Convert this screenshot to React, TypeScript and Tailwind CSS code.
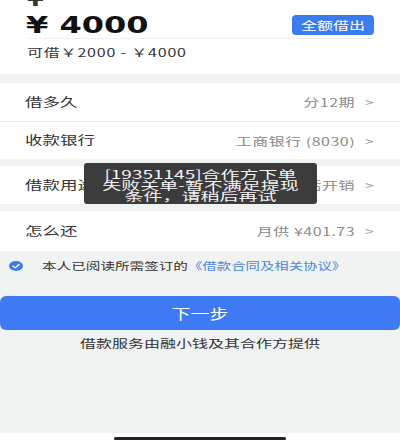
import React from 'react';

const sq = 'inline-block scale-y-[0.7]';

function Row({ label, value, divider }: { label: string; value: string; divider?: boolean }) {
  return (
    <div className={`flex items-center justify-between pl-[25px] pr-[26px] ${divider ? 'border-b border-[#ececec]' : ''} h-full`}>
      <span className={`${sq} text-[17.5px] text-[#333]`}>{label}</span>
      <div className="flex items-center">
        <span className={`${sq} text-[16px] tracking-[0.5px] text-[#8a8a8a]`}>{value}</span>
        <span className={`${sq} ml-[10px] text-[16px] text-[#a0a0a0]`}>&gt;</span>
      </div>
    </div>
  );
}

export default function App() {
  return (
    <div className="relative flex h-[443px] w-full flex-col overflow-hidden bg-[#f1f2f2] font-['Noto_Sans_CJK_SC',sans-serif]">
      {/* amount card */}
      <div className="bg-white pb-[9px]">
        <div className="h-[12px] overflow-hidden pl-[27px]">
          <span className="-mt-[14px] block font-['DejaVu_Sans',sans-serif] text-[24px] font-bold leading-[24px] text-[#333]">¥</span>
        </div>
        <div className="mx-[26px] flex h-[27px] items-center justify-between border-b border-[#efefef]">
          <span className={`${sq} font-['DejaVu_Sans',sans-serif] text-[32px] font-bold leading-none text-[#111]`}>¥ 4000</span>
          <button className="flex h-[20px] w-[82px] items-center justify-center rounded-[4px] bg-[#3b7bf0]">
            <span className={`${sq} text-[16px] leading-none text-white`}>全额借出</span>
          </button>
        </div>
        <div className="flex h-[26px] items-center pl-[27px]">
          <span className={`${sq} text-[16px] tracking-[0.8px] text-[#333]`}>可借￥2000 - ￥4000</span>
        </div>
      </div>

      <div className="mt-[9px] bg-white">
        <div className="h-[39px]">
          <Row label="借多久" value="分12期" divider />
        </div>
        <div className="h-[37px]">
          <Row label="收款银行" value="工商银行 (8030)" />
        </div>
      </div>

      <div className="mt-[7px] h-[38px] bg-white">
        <Row label="借款用途" value="生活开销" />
      </div>

      <div className="mt-[7px] h-[40px] bg-white">
        <Row label="怎么还" value="月供 ¥401.73" />
      </div>

      {/* agreement */}
      <div className="flex h-[30px] items-center pl-[9px]">
        <svg width="14" height="10" viewBox="0 0 14 10">
          <ellipse cx="7" cy="5" rx="7" ry="5" fill="#3b7bf0" />
          <polyline points="4,5.2 6.2,6.8 10,3.4" fill="none" stroke="white" strokeWidth="1.4" strokeLinecap="round" strokeLinejoin="round" />
        </svg>
        <span className={`${sq} ml-[19px] text-[14.6px] text-[#333]`}>本人已阅读所需签订的</span>
        <span className={`${sq} text-[14.4px] text-[#4a86e0]`}>《借款合同及相关协议》</span>
      </div>

      <button className="mt-[15px] flex h-[34px] w-full items-center justify-center rounded-[6px] bg-[#3d7af4]">
        <span className={`${sq} text-[19px] text-white`}>下一步</span>
      </button>

      <div className="mt-[3px] flex h-[20px] items-center justify-center">
        <span className={`${sq} text-[16px] text-[#333]`}>借款服务由融小钱及其合作方提供</span>
      </div>

      <div className="flex-1" />

      <div className="flex h-[10px] justify-center bg-white pt-[4px]">
        <div className="h-[3px] w-[172px] rounded-full bg-[#222]" />
      </div>

      {/* toast */}
      <div className="absolute left-[84px] top-[163px] h-[41px] w-[233px] overflow-hidden rounded-[3px] bg-[#3b3b3b]">
        <div className="absolute left-0 right-0 top-[5px] origin-top scale-y-[0.62] text-center text-[19px] leading-[18.5px] text-[#f4f4f4]">
          <div>[19351145]合作方下单</div>
          <div>失败关单-暂不满足提现</div>
          <div>条件，请稍后再试</div>
        </div>
      </div>
    </div>
  );
}
